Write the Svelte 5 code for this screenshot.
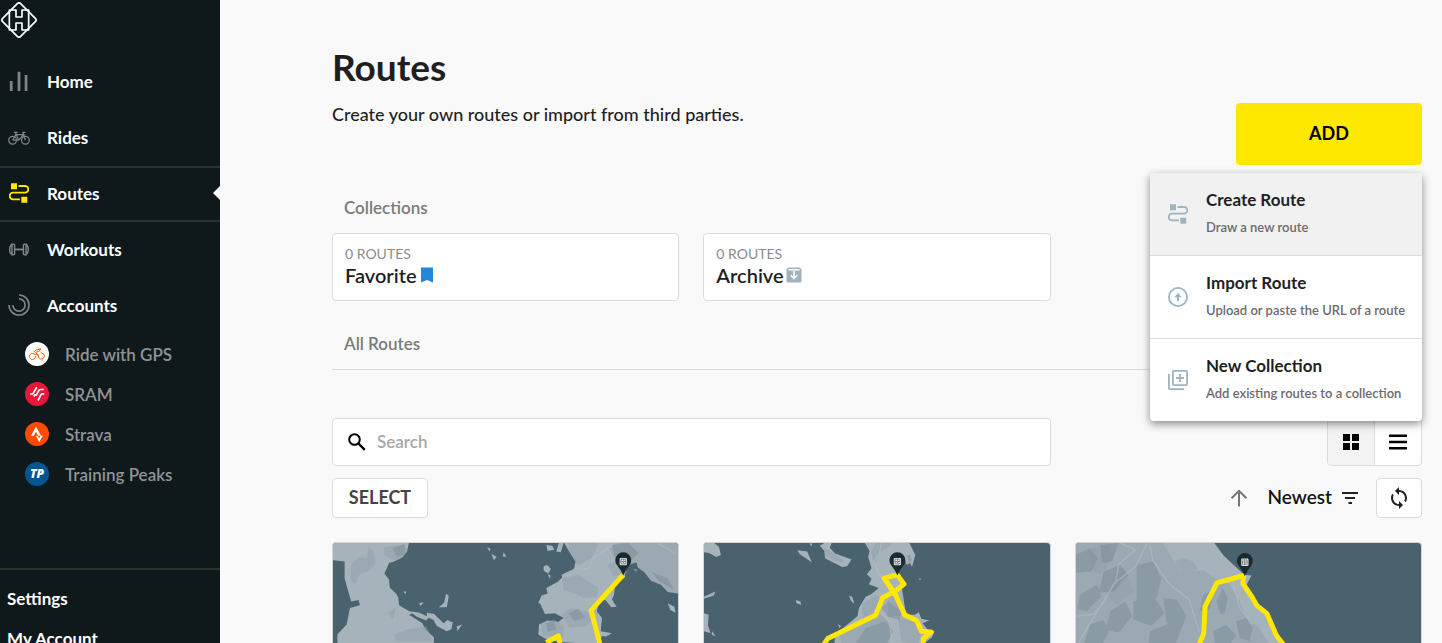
<script lang="ts">
  type Account = { name: string; logo: 'rwgps' | 'sram' | 'strava' | 'tp' };

  const nav = [
    { label: 'Home', icon: 'bars' },
    { label: 'Rides', icon: 'bike' },
    { label: 'Routes', icon: 'route' },
    { label: 'Workouts', icon: 'dumbbell' },
    { label: 'Accounts', icon: 'rings' }
  ];

  const accounts: Account[] = [
    { name: 'Ride with GPS', logo: 'rwgps' },
    { name: 'SRAM', logo: 'sram' },
    { name: 'Strava', logo: 'strava' },
    { name: 'Training Peaks', logo: 'tp' }
  ];

  const addOptions = [
    { title: 'Create Route', text: 'Draw a new route', icon: 'route' },
    { title: 'Import Route', text: 'Upload or paste the URL of a route', icon: 'upload' },
    { title: 'New Collection', text: 'Add existing routes to a collection', icon: 'library' }
  ];

  // land / relief shapes and the track of each route, in map units
  const maps = [
    {
      view: '21 24 1041 620',
      land: [
        'M21 24H250L244 50 230 68 205 80 190 84 176 116 190 135 192 158 212 178 218 190 220 212 262 236 250 240 290 265 300 285 325 308 330 644H40L34 300 62 270 66 250 72 220 102 212 98 196 76 200 64 160 56 130V80L21 76Z',
        'M718 24H1062V176L1030 172 1010 150 980 138 960 112 940 98 936 82 905 92 900 128 872 150 868 180 862 194 876 216 860 218 842 196 826 196 816 230 832 250 830 270 828 290 862 296 844 306 832 304 820 330 700 322 660 312 640 300 642 270 668 258 700 262 716 250 690 236 660 238 646 208 640 204 650 182 668 176 664 160 700 140 712 128 710 120 748 102 752 80 738 58Z',
        'M702 24h14l-8 28-14-2zM664 30l18 2 6 12-20 4zM656 94l10-4 12 12-8 14-14-8zM486 36l10 6-4 8zM498 56l16 10-8 10zM536 52l8 14-12-2zM362 176l8 8-6 34-24 0 16-14zM304 234l22 4 28 28 12 -10 16 8-4 20-14 6-30-16-10-18-20-10zM394 276l16-6-14 20zM252 230l30 4 28 14-8 10-28-12zM280 206l14-4-8 12zM1030 206l20 10 4 18-16-8zM232 170l10 0-2 8zM668 120h8v12zM926 104h10v6z'
      ],
      relief: [
        'M174 36L240 28 246 50 230 66 205 78 176 60ZM76 90L100 66 124 70 128 34 142 50 150 82 136 104 100 120 88 150 74 138ZM186 236l24-18-8 36zM204 300l40-16 58-8 22 44H212z',
        'M730 24h92l-20 44-42 24-26-40zM848 90l40-20 20 44-40 10zM712 130l50-10 40 28 20 10-6 28-40 4-26-14-34-10zM710 240l30-20 44 10 24 24-26 20-48 4zM650 268l36-14 30 20-4 34-60-4zM850 40l30-16h182v152l-32-4-20-22-30-12-20-26-20-14-4-16-31 10-30-20z'
      ],
      shade: [
        'M200 40l36-12 4 30-26 8zM862 30l50-6 30 30-26 26-44-6zM730 236l30-14 20 26-30 12zM664 266l20-6 10 24-26 8zM980 110l50 20 20 36-50-30z'
      ],
      roads: 'M746 102h44l18-36 54-34M1000 24l56 34',
      track: 'M896 120L799 227 826 330M664 324L700 304 706 330',
      pin: [896, 122]
    },
    {
      view: '25 24 1041 620',
      land: [
        'M510 24H644L662 60 652 96 646 84 636 90 626 62 600 76 606 120 620 150 634 240 662 240 672 232 680 252 704 258 684 266 700 286 720 290 712 308 684 330 670 644H400L420 300 450 276 488 244 492 220 512 186 530 178 552 160 522 148 530 132 516 118 530 100 520 66 524 48Z',
        'M25 24H56L70 36 76 60 62 66 40 54 25 52ZM374 32l14-8h22l-6 14 16 18 50 18-14 20-14 2-36-18-16-8-2-22zM306 46l30 4 14 32-36-24zM342 26l8-2v10zM25 186l34-16-4 12-30 10zM462 182l10 4 6 22-10-10zM302 196l14 4 2 10-14-4zM338 236l14 4zM320 160l8 2zM428 268l10 6-4 6zM672 130l8 2-4 4zM25 236l14 4-2 32 8 24-20-6zM50 290l10 16-12-6zM554 66l20 14-8 2z'
      ],
      relief: [
        'M540 90l18-40 26-16 8-10h-50l-14 30zM500 210l44-30 20 24-16 40-44 10zM580 180l40 10 10 50-50 6zM430 290l70-30 60-20 30 30-10 60H440zM610 250l50 10 20 30-10 40-50-10zM384 36l40 24 30 24-34-6-30-16z'
      ],
      shade: ['M560 220l20-20 40 30-6 26-34-10zM512 280l60-20 24 30-20 40H480zM636 60l12 0 4 20-10 4z'],
      roads: 'M560 24l-6 30-16 26 10 30 14 22M560 232l24 30 8 62',
      track: 'M386 330L398 312 542 242 564 188 600 170 628 148 608 120 568 130 602 180 630 240 666 258 680 290 710 292 686 312V330',
      pin: [608, 122]
    },
    {
      view: '17 24 1041 620',
      land: ['M17 24H434L462 62 524 120 546 122 530 152 560 210 590 230 604 244 612 290 650 330 700 644H17Z'],
      relief: [
        'M17 24H280L300 60 330 110 400 106 450 140 480 150 510 200 530 250 570 280 600 330H17ZM316 80l20-12 30 10 20 24-30 10-20 6z',
        'M60 40l50-10 20 40-40 50-30-20zM130 120l40-10 20 60-50 40-30-30z'
      ],
      shade: [
        'M17 60l40-20 26 30-20 40-46 4zM90 30l56-6-20 54-30 6zM100 110l50-20 24 30-44 50-44 4zM30 180l50-30 14 34-44 46-30-6zM200 90l50-10 24 50-14 60-60 10zM190 200l60-16 34 50-40 40-54-20zM280 190l40 4 30 50-20 50-40-30zM120 230l46-30 20 44-40 50-40-8zM60 270l40-14 16 34-20 40H40zM240 290l60-24 30 30-14 34H236zM390 230l10-50 30-14-10 60zM440 200l20-40 14 30-8 46-14 2zM430 290l40-20 30 34-20 26h-44zM500 260l30-10 20 30-10 40-30-10z'
      ],
      roads: 'M17 244l50-4 28-30 36-64 66-50 34-72M150 24l46 20-50 44 -10 54-50 80-60 100M240 30l8 44 20 30 30 44 60 46 12 40 20 60M490 140l20 80 40 50',
      track: 'M388 330L402 296 406 216 442 144 522 122 520 146 546 184 562 212 592 236 622 304 642 330',
      pin: [526, 124]
    }
  ];

  let active = $state('Routes');
  let menuOpen = $state(true);
  let query = $state('');
  let view = $state('grid');
</script>

{#snippet icon(name: string)}
  {#if name === 'bars'}
    <svg class="icon" viewBox="0 0 24 24"><path d="M3.500 23V12M12 23V2M19.700 23V5.500" stroke="currentColor" stroke-width="3" fill="none" /></svg>
  {:else if name === 'bike'}
    <svg class="icon" viewBox="0 0 24 24" fill="none" stroke="currentColor" stroke-width="1.400">
      <circle cx="5" cy="15.500" r="4.200" />
      <circle cx="19" cy="15.500" r="4.200" />
      <path d="M5 15.500L8.500 9.500H17L11.700 15.500H5M8 7L11.700 15.500M6.500 7H10.500M19 15.500L16.300 7H19" />
    </svg>
  {:else if name === 'route'}
    <svg class="icon small" viewBox="0 0 20 20">
      <path d="M9.500 3H16a3.300 3.300 0 0 1 0 6.700H4a3.300 3.300 0 0 0 0 6.700h7" fill="none" stroke="currentColor" stroke-width="1.800" />
      <path d="M2 .300h6v6H2zM12.300 13.700h6v6h-6z" fill="currentColor" />
    </svg>
  {:else if name === 'dumbbell'}
    <svg class="icon" viewBox="0 0 24 24" fill="none" stroke="currentColor" stroke-width="1.600">
      <path d="M7.500 12.500h9" stroke-width="2" />
      <path d="M4.300 6.800H6.200Q7.200 6.800 7.200 7.800V17.200Q7.200 18.200 6.200 18.200H4.300zM4.300 6.800Q1.800 8.500 1.800 12.500T4.300 18.200" />
      <path d="M19.700 6.800H17.800Q16.800 6.800 16.800 7.800V17.200Q16.800 18.200 17.800 18.200H19.700zM19.700 6.800Q22.200 8.500 22.200 12.500T19.700 18.200" />
    </svg>
  {:else if name === 'rings'}
    <svg class="icon" viewBox="0 0 24 24" fill="none" stroke="currentColor" stroke-width="1.800">
      <path d="M12 1.100A10.900 10.900 0 1 1 1.100 12" />
      <path d="M12 5.300A6.700 6.700 0 1 1 5.300 12" />
    </svg>
  {:else if name === 'upload'}
    <svg class="icon small" viewBox="0 0 20 20" fill="none" stroke="currentColor">
      <circle cx="10" cy="10" r="9.100" stroke-width="1.800" />
      <path d="M10 14V8" stroke-width="2" />
      <path d="M6.300 10.200L10 6l3.700 4.200z" fill="currentColor" stroke="none" />
    </svg>
  {:else if name === 'library'}
    <svg class="icon small" viewBox="0 0 20 20" fill="none" stroke="currentColor" stroke-width="1.800">
      <rect x="4.900" y=".900" width="14.200" height="14.200" rx="1" />
      <path d="M.900 4v14.200q0 .900.900.900H16M12 4v8M8 8h8" />
    </svg>
  {/if}
{/snippet}

{#snippet accountLogo(logo: Account['logo'])}
  <svg class="account-logo" viewBox="0 0 24 24" fill="none">
    {#if logo === 'rwgps'}
      <circle cx="12" cy="12" r="12" fill="#fff" />
      <path d="M10.300 13.800A3 3 0 1 1 7.800 11.500L13.500 13.200 10.600 10.600 15 8.600M13.500 13.200A3 3 0 1 0 17 11.200L15.600 10M8.800 10.200Q10.500 7.300 14 7.500" stroke="#fa6400" stroke-width="1" />
      <circle cx="15" cy="7.200" r="1" fill="#fa6400" />
    {:else if logo === 'sram'}
      <circle cx="12" cy="12" r="12" fill="#e51937" />
      <path d="M5 12h2.800l4-6.800M8.800 14.500l1.200-1.700h1.500l2.200-4.200q.600-1.100 1.700-1.100h3.300M13 18.500l3-5.800q.500-.900 1.500-.900h1.800" stroke="#fff" stroke-width="1.700" />
    {:else if logo === 'strava'}
      <circle cx="12" cy="12" r="12" fill="#fc4c02" />
      <path d="M11 4.500l5 9.200h-2.800L11 9.700l-2.200 4H6z" fill="#fff" />
      <path d="M10.800 13.700h2l1.400 2.600 1.400-2.600h2.200l-3.600 6.300z" fill="#fff" />
    {:else}
      <circle cx="12" cy="12" r="12" fill="#005695" />
      <text class="tp" x="12" y="16" text-anchor="middle">TP</text>
    {/if}
  </svg>
{/snippet}

<div class="app">
  <aside class="sidebar">
    <a class="brand" href="#home" aria-label="Hammerhead">
      <svg viewBox="0 0 108 108" fill="none" stroke="#fff" stroke-width="5" stroke-linejoin="round">
        <path d="M49 5Q54 0 59 5L103 49Q108 54 103 59L59 103Q54 108 49 103L5 59Q0 54 5 49Z" />
        <path d="M25 24H45V45H63V24H83V84H63V63H45V84H25Z" />
      </svg>
    </a>
    <nav>
      {#each nav as item}
        <a
          class="nav-item"
          class:active={active === item.label}
          href="#{item.label.toLowerCase()}"
          onclick={() => (active = item.label)}
        >
          <span class="nav-icon">{@render icon(item.icon)}</span>
          {item.label}
        </a>
      {/each}
      {#each accounts as account}
        <a class="account" href="#accounts">
          {@render accountLogo(account.logo)}
          {account.name}
        </a>
      {/each}
    </nav>
    <div class="settings">
      <a href="#settings">Settings</a>
      <a href="#my-account">My Account</a>
    </div>
  </aside>

  <main>
    <header>
      <div class="intro">
        <h1>Routes</h1>
        <p>Create your own routes or import from third parties.</p>
      </div>
      <div class="add-wrap">
        <button class="add" onclick={() => (menuOpen = !menuOpen)}>ADD</button>
        {#if menuOpen}
          <div class="menu" role="menu">
            {#each addOptions as option, i}
              <button class="option" class:hovered={i === 0} role="menuitem">
                <span class="option-icon">{@render icon(option.icon)}</span>
                <span class="option-body">
                  <span class="option-title">{option.title}</span>
                  <span class="option-text">{option.text}</span>
                </span>
              </button>
            {/each}
          </div>
        {/if}
      </div>
    </header>

    <h2>Collections</h2>
    <div class="grid">
      <a class="collection" href="#favorite">
        <span class="count">0 ROUTES</span>
        <span class="name">
          Favorite
          <svg class="badge" viewBox="0 0 16 16"><path d="M2 .500h12V15.500L8 13 2 15.500z" fill="#2286dc" /></svg>
        </span>
      </a>
      <a class="collection" href="#archive">
        <span class="count">0 ROUTES</span>
        <span class="name">
          Archive
          <svg class="badge" viewBox="0 0 16 16">
            <path d="M2 .500h12l1.500 2V14q0 1.500-1.500 1.500H2Q.500 15.500.500 14V2.500z" fill="#a0b3bd" />
            <path d="M2.500 2.800h11M8 4v7M4.800 8.200L8 11.400l3.200-3.200" stroke="#fff" stroke-width="1.600" fill="none" />
          </svg>
        </span>
      </a>
    </div>

    <h2 class="ruled">All Routes</h2>

    <div class="grid search-row">
      <label class="search">
        <svg viewBox="0 0 18 18" fill="none" stroke="#000"><circle cx="6.500" cy="6.500" r="5.300" stroke-width="2" /><path d="M10.500 10.500l6.300 6.300" stroke-width="2.400" /></svg>
        <input type="text" placeholder="Search" aria-label="Search" bind:value={query} />
      </label>
      <div class="views">
        <button class:on={view === 'grid'} aria-label="Grid view" onclick={() => (view = 'grid')}>
          <svg viewBox="0 0 24 24"><path d="M4 4h7v7H4zM13 4h7v7h-7zM4 13h7v7H4zM13 13h7v7h-7z" /></svg>
        </button>
        <button class:on={view === 'list'} aria-label="List view" onclick={() => (view = 'list')}>
          <svg viewBox="0 0 24 24"><path d="M3 4.500h18v2.600H3zM3 10.700h18v2.600H3zM3 17h18v2.600H3z" /></svg>
        </button>
      </div>
    </div>

    <div class="tools">
      <button class="select">SELECT</button>
      <button class="direction" aria-label="Sort ascending">
        <svg viewBox="0 0 24 24" fill="none" stroke="#757575" stroke-width="2"><path d="M12 20.500V5M4.500 12.300L12 4.800l7.500 7.500" /></svg>
      </button>
      <button class="sort">
        <span>Newest</span>
        <svg viewBox="0 0 18 18"><path d="M1 3h16v2H1zM4 8h10v2H4zM7.500 13h3.500v2H7.500z" fill="#222" /></svg>
      </button>
      <button class="refresh" aria-label="Refresh">
        <svg viewBox="0 0 24 24"><path d="M12 4V1L8 5l4 4V6c3.310 0 6 2.690 6 6 0 1.010-.250 1.970-.700 2.800l1.460 1.460A7.930 7.930 0 0 0 20 12c0-4.420-3.580-8-8-8zm0 14c-3.310 0-6-2.690-6-6 0-1.010.250-1.970.700-2.800L5.240 7.740A7.930 7.930 0 0 0 4 12c0 4.420 3.580 8 8 8v3l4-4-4-4v3z" fill="#222" /></svg>
      </button>
    </div>

    <div class="grid">
      {#each maps as map}
        <a class="route-card" href="#route" aria-label="Route map">
          <svg viewBox={map.view} preserveAspectRatio="xMidYMin slice">
            {#each map.land as d}<path {d} fill="#a7b3ba" />{/each}
            {#each map.relief as d}<path {d} fill="#8f9fa9" fill-opacity="0.5" />{/each}
            {#each map.shade as d}<path {d} fill="#738792" fill-opacity="0.4" />{/each}
            <path d={map.roads} fill="none" stroke="#b4bec4" stroke-width="4" stroke-opacity="0.6" />
            <path d={map.track} fill="none" stroke="#ffe800" stroke-width="15" stroke-linejoin="round" />
            <g transform="translate({map.pin[0]} {map.pin[1]})">
              <path d="M0 0Q-7 -17 -18 -30A24 24 0 1 1 18 -30Q7 -17 0 0Z" fill="#1b2a2d" />
              <rect x="-11" y="-53" width="22" height="22" rx="3" fill="#e0e3e4" />
              <path d="M-7 -49H7V-35H-7ZM0 -50V-34M-8 -42H8" fill="none" stroke="#59676c" stroke-width="3" stroke-dasharray="3 2" />
            </g>
          </svg>
        </a>
      {/each}
    </div>
  </main>
</div>

<style>
  :global(body) {
    background: #f9f9f9;
    color: #1f1f1f;
    font-family: Lato, 'Open Sans', sans-serif;
  }
  .app {
    display: flex;
    height: 100vh;
    overflow: hidden;
  }
  a {
    color: inherit;
    text-decoration: none;
  }
  button {
    font: inherit;
    color: inherit;
    cursor: pointer;
    padding: 0;
    border: 0;
    background: none;
  }
  svg {
    display: block;
    flex: none;
  }
  .icon {
    width: 22px;
    height: 22px;
  }
  .icon.small {
    width: 20px;
    height: 20px;
  }

  .sidebar {
    flex: none;
    width: 220px;
    background: #0f181a;
    color: #fff;
    overflow: hidden;
    font-size: 17px;
    font-weight: 700;
  }
  .brand {
    display: block;
    height: 54px;
    padding: 2px 0 0 1px;
    box-sizing: border-box;
  }
  .brand svg {
    width: 36px;
    height: 36px;
  }
  .nav-item {
    position: relative;
    display: flex;
    align-items: center;
    gap: 17px;
    height: 56px;
    padding: 0 0 2px 8px;
    box-sizing: border-box;
    border: solid transparent;
    border-width: 2px 0;
  }
  .nav-icon {
    display: flex;
    justify-content: center;
    width: 22px;
    color: #7f8486;
  }
  .nav-item.active {
    border-color: #2a322c;
  }
  .nav-item.active .nav-icon {
    color: #ffe800;
  }
  .nav-item.active::after {
    content: '';
    position: absolute;
    right: 0;
    border: 7px solid transparent;
    border-right-color: #f9f9f9;
    border-left: 0;
  }
  .account {
    display: flex;
    align-items: center;
    gap: 16px;
    height: 40px;
    padding-left: 25px;
    color: #919495;
    font-weight: 600;
  }
  .account-logo {
    width: 24px;
    height: 24px;
  }
  .tp {
    font: italic 800 12px 'Open Sans', sans-serif;
    fill: #fff;
  }
  .settings {
    margin-top: 74px;
    padding: 9px 7px;
    border-top: 2px solid #2a322c;
  }
  .settings a {
    display: block;
    line-height: 40px;
  }

  main {
    flex: 1;
    min-width: 0;
    padding: 43px 20px 24px 112px;
    overflow: auto;
    scrollbar-width: none;
  }
  header {
    display: flex;
    justify-content: space-between;
    align-items: flex-end;
  }
  .intro {
    align-self: flex-start;
  }
  h1 {
    margin: 0;
    font-size: 37px;
    line-height: 48px;
    font-weight: 700;
  }
  p {
    margin: 11px 0 0;
    font-size: 18px;
    line-height: 24px;
    font-weight: 500;
  }
  .add-wrap {
    position: relative;
    padding-top: 60px;
  }
  .add {
    display: block;
    width: 186px;
    height: 62px;
    padding-bottom: 2px;
    border-radius: 4px;
    background: #ffe800;
    color: #000;
    font-size: 18px;
    font-weight: 700;
  }
  .menu {
    position: absolute;
    z-index: 2;
    top: 100%;
    right: 0;
    width: 272px;
    margin-top: 8px;
    border-radius: 4px;
    background: #fff;
    overflow: hidden;
    box-shadow: 0 3px 8px rgba(0, 0, 0, 0.45);
  }
  .option {
    display: flex;
    align-items: center;
    gap: 18px;
    width: 100%;
    height: 83px;
    padding: 0 12px 1px 18px;
    border-bottom: 1px solid #dcdcdc;
    text-align: left;
  }
  .option:last-child {
    height: 82px;
    border-bottom: 0;
  }
  .option.hovered {
    background: #f1f1f1;
  }
  .option-icon {
    color: #9fb4bf;
  }
  .option-body {
    display: grid;
    gap: 3px;
    white-space: nowrap;
  }
  .option-title {
    font-size: 17px;
    line-height: 24px;
    font-weight: 700;
  }
  .option-text {
    font-size: 13px;
    line-height: 24px;
    font-weight: 600;
    color: #6b6b6b;
  }

  h2 {
    margin: 31px 0 0;
    padding: 0 12px 13px;
    font-size: 17px;
    line-height: 24px;
    font-weight: 600;
    color: #7b7b7b;
  }
  h2.ruled {
    border-bottom: 1px solid #dcdcdc;
  }
  .grid {
    display: grid;
    grid-template-columns: repeat(3, 1fr);
    gap: 24px;
  }
  .collection {
    display: flex;
    flex-direction: column;
    height: 68px;
    padding: 10px 12px;
    box-sizing: border-box;
    border: 1px solid #dcdcdc;
    border-radius: 4px;
    background: #fff;
  }
  .count {
    font-size: 14px;
    line-height: 20px;
    color: #8c8c8c;
  }
  .name {
    display: flex;
    align-items: center;
    gap: 2px;
    font-size: 20px;
    line-height: 22px;
    font-weight: 600;
  }
  .badge {
    width: 16px;
    height: 16px;
  }

  .search-row {
    margin-top: 48px;
  }
  .search {
    grid-column: span 2;
    display: flex;
    align-items: center;
    gap: 11px;
    height: 48px;
    padding: 0 15px;
    box-sizing: border-box;
    border: 1px solid #dcdcdc;
    border-radius: 4px;
    background: #fff;
  }
  .search svg {
    width: 18px;
    height: 18px;
  }
  .search input {
    flex: 1;
    border: 0;
    padding: 0 0 2px;
    outline: 0;
    background: none;
    font: inherit;
    font-size: 17px;
    font-weight: 600;
  }
  .search input::placeholder {
    color: #a8a8a8;
  }
  .views {
    justify-self: end;
    display: flex;
    border: 1px solid #dcdcdc;
    border-radius: 4px;
    background: #fff;
    overflow: hidden;
  }
  .views button {
    width: 46px;
    display: grid;
    place-items: center;
  }
  .views button + button {
    width: 47px;
    border-left: 1px solid #dcdcdc;
  }
  .views .on {
    background: #f3f3f3;
  }
  .views svg {
    width: 24px;
    height: 24px;
  }
  .tools {
    display: flex;
    align-items: center;
    margin: 12px 0 24px;
    font-size: 19px;
  }
  .select,
  .refresh {
    height: 40px;
    border: 1px solid #dcdcdc;
    border-radius: 4px;
    background: #fff;
  }
  .select {
    width: 96px;
    padding-bottom: 3px;
    color: #444;
    font-size: 18px;
    font-weight: 700;
  }
  .direction {
    margin: 0 16px 0 auto;
  }
  .direction svg {
    width: 24px;
    height: 24px;
  }
  .sort {
    display: flex;
    align-items: center;
    gap: 9px;
    margin-right: 17px;
    font-weight: 600;
    color: #111;
  }
  .sort span {
    padding-bottom: 3px;
  }
  .sort svg {
    width: 18px;
    height: 18px;
  }
  .refresh {
    display: grid;
    place-items: center;
    width: 46px;
  }
  .refresh svg {
    width: 24px;
    height: 24px;
  }
  .route-card {
    border: 1px solid #d2d5d6;
    border-radius: 4px;
    overflow: hidden;
    background: #4a626e;
  }
  .route-card svg {
    width: 100%;
    height: auto;
  }
</style>
